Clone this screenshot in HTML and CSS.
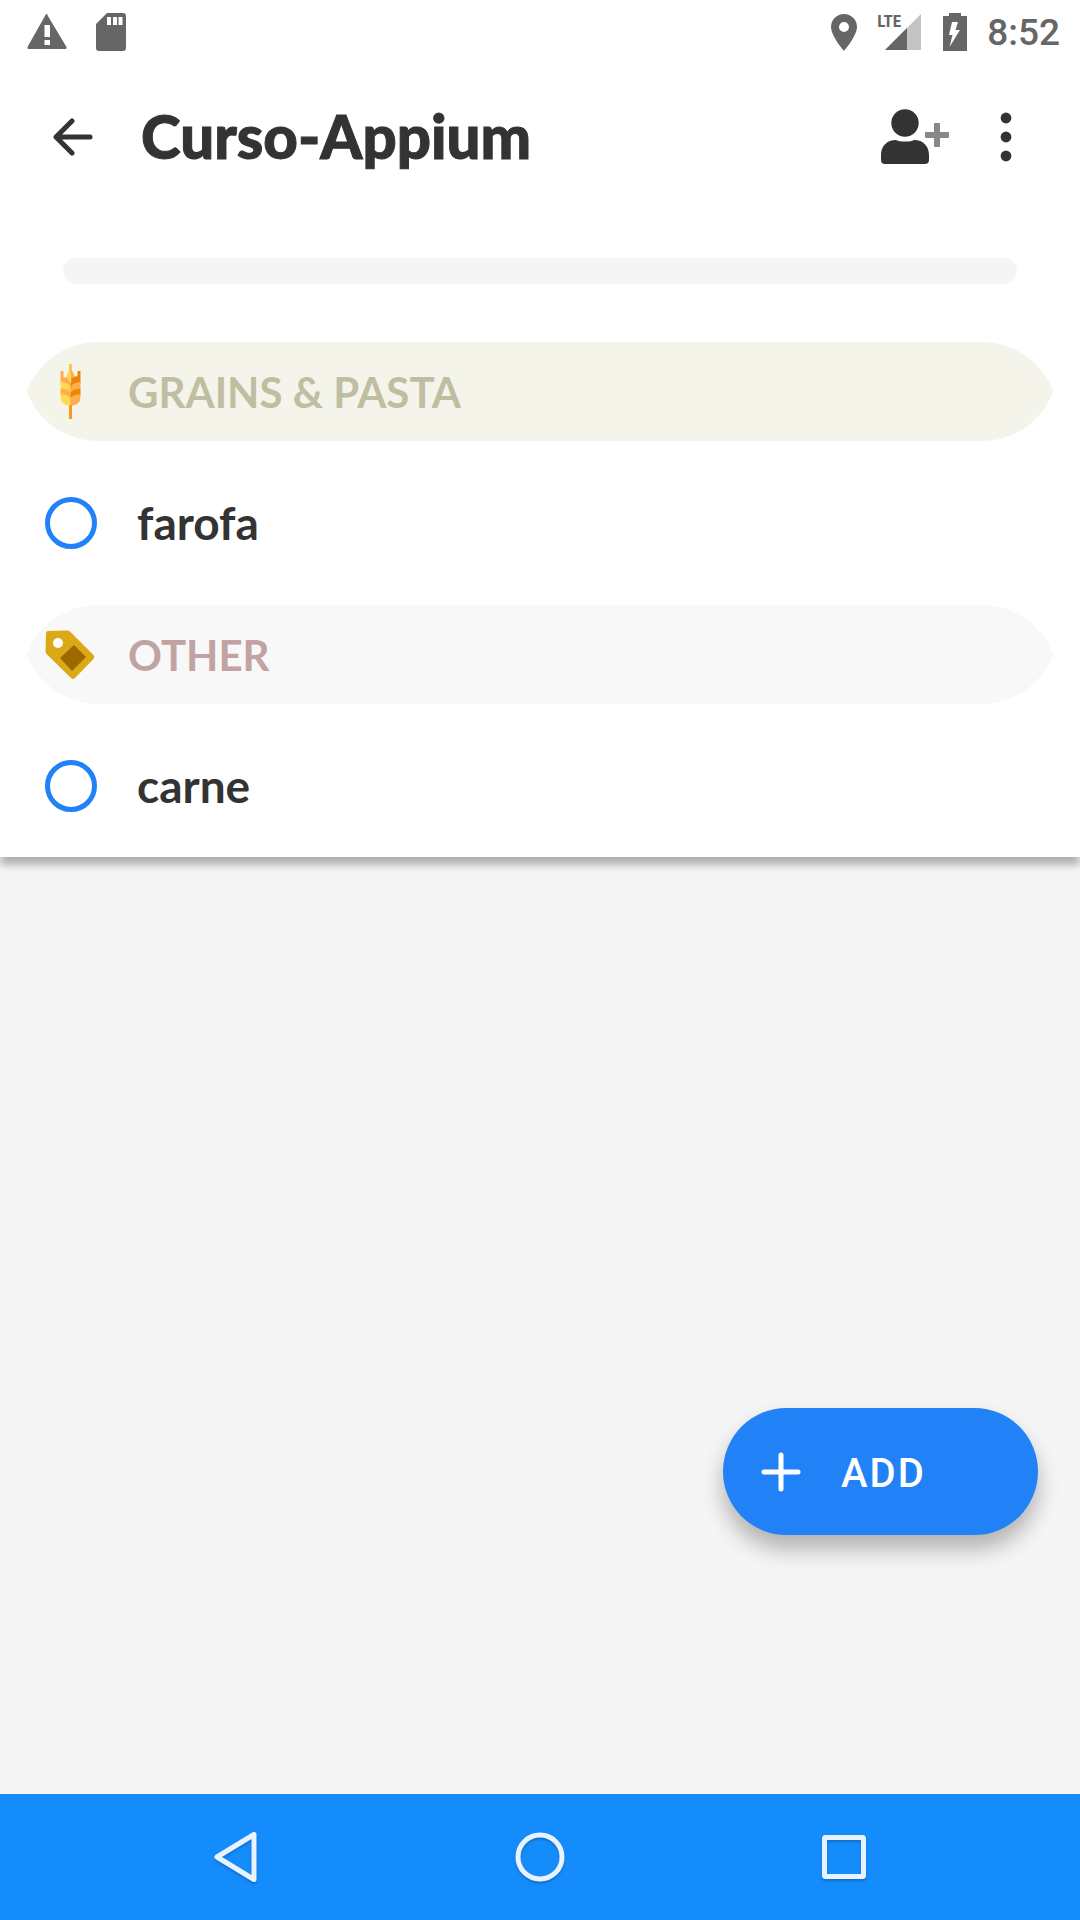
FILE: index.html
```html
<!DOCTYPE html>
<html lang="en">
<head>
<meta charset="utf-8">
<meta name="viewport" content="width=device-width, initial-scale=1">
<title>Curso-Appium</title>
<link rel="stylesheet" href="styles.css">
</head>
<body>
<div class="sheet">
  <div class="status">
    <svg class="status-alert" width="42" height="38" viewBox="0 0 42 38" aria-hidden="true"><path fill="#666" fill-rule="evenodd" d="M21 1.500L40.500 34Q41 36 39.500 36H2.500Q1 36 1.500 34L19.500 2Q21 0 22.500 2ZM18.500 12V24H24V12ZM18.500 27V32H24V27Z"/></svg>
    <svg width="32" height="38" viewBox="0 0 32 38" aria-hidden="true"><path fill="#666" fill-rule="evenodd" d="M12 0H28Q31 0 31 3V35Q31 38 28 38H4Q1 38 1 35V11ZM12 4V12H16V4ZM18 4V12H22V4ZM23.500 4V12H27.500V4Z"/></svg>
    <div class="status-right">
      <svg width="26" height="38" viewBox="0 0 26 38" aria-hidden="true"><path fill="#666" fill-rule="evenodd" d="M13 1A13 13 0 0 0 0 14C0 23 13 38 13 38S26 23 26 14A13 13 0 0 0 13 1ZM13 9A5 5 0 1 1 13 19A5 5 0 1 1 13 9Z"/></svg>
      <div class="signal">
        <svg width="36" height="38" viewBox="0 0 36 38" aria-hidden="true"><path fill="#c3c3c3" d="M0 37H36V1Z"/><path fill="#666" d="M0 37H22V15Z"/></svg>
        <span class="network">LTE</span>
      </div>
      <svg width="24" height="38" viewBox="0 0 24 38" aria-hidden="true"><path fill="#666" d="M6 0H18V3H24V38H0V3H6Z"/><path fill="#fff" d="M9 9H15L12.500 17H17L6.500 34L9.500 22H6Z"/></svg>
      <time class="clock">8:52</time>
    </div>
  </div>

  <header class="appbar">
    <button class="icon-button" aria-label="Back"><svg width="40" height="40" viewBox="0 0 40 40"><path d="M19 4L3 20L19 36M3 20H37" fill="none" stroke="#333" stroke-width="5" stroke-linecap="round" stroke-linejoin="round"/></svg></button>
    <h1 class="title">Curso-Appium</h1>
    <button class="icon-button" aria-label="Share list"><svg width="70" height="56" viewBox="0 0 70 56"><circle cx="24" cy="14" r="13.700" fill="#333"/><path fill="#333" d="M0 46C0 37 6 31 15 31Q18 32.500 24 32.500T33 31C42 31 48 37 48 46V51Q48 55 44 55H4Q0 55 0 51Z"/><path fill="#888" d="M53 15Q53 14 54 14H58Q59 14 59 15V23H67Q68 23 68 24V28Q68 29 67 29H59V37Q59 38 58 38H54Q53 38 53 37V29H45Q44 29 44 28V24Q44 23 45 23H53Z"/></svg></button>
    <button class="icon-button more" aria-label="More options"><svg width="12" height="50" viewBox="0 0 12 50"><g fill="#333"><circle cx="6" cy="6" r="5.400"/><circle cx="6" cy="25" r="5.400"/><circle cx="6" cy="44" r="5.400"/></g></svg></button>
  </header>

  <div class="progress"></div>

  <section class="group">
    <h2 class="chip grains">
      <svg class="chip-icon" width="50" height="56" viewBox="0 0 50 56" aria-hidden="true">
        <path fill="#ffc94d" d="M24 0H27V8H24Z"/>
        <path fill="#ffda4f" d="M25.500 5Q21 10 21 16H25.500Z"/><path fill="#ffab4a" d="M25.500 5Q30 10 30 16H25.500Z"/>
        <path fill="#ffae4f" d="M15.500 7H18.500V13Q25.500 14 25.500 20V28Q23 20 15.500 20Z"/>
        <path fill="#ef8500" d="M35.500 7H32.500V12Q25.500 13 25.500 19V27Q28 19 35.500 19Z"/>
        <path fill="#ffda4f" d="M15.500 18Q24 18 25.500 24V31Q22 25 15.500 25Z"/>
        <path fill="#ffae4f" d="M35.500 18Q27 18 25.500 24V31Q29 25 35.500 25Z"/>
        <path fill="#ffae4f" d="M15.500 24.500Q24 25 25.500 29V38Q22 31 15.500 31Z"/>
        <path fill="#ef8500" d="M35.500 24.500Q27 25 25.500 29V38Q29 31 35.500 31Z"/>
        <path fill="#ffda4f" d="M15.500 30.500Q24 30 25.500 35V42Q15.500 41 15.500 33Z"/>
        <path fill="#ffae4f" d="M35.500 30.500Q27 30 25.500 35V42Q35.500 41 35.500 33Z"/>
        <path fill="#f99a20" d="M24 41H27V55H24Z"/>
      </svg>
      <span>GRAINS &amp; PASTA</span>
    </h2>
    <label class="item"><input type="checkbox" class="tick"><span>farofa</span></label>
  </section>

  <section class="group">
    <h2 class="chip other">
      <svg class="chip-icon" width="50" height="50" viewBox="0 0 50 50" aria-hidden="true">
        <path fill="#dba916" d="M3 1L22 .5Q24 .5 25 1.500L48.500 25Q50 27 48.500 29L30 48Q28 50 26 48L1.500 24Q.5 23 .5 21L1 3Q1 1 3 1Z"/>
        <circle cx="13" cy="13" r="5" fill="#fff"/><path fill="#9c6800" d="M29 15L41 27L27 41L15 28Z"/>
      </svg>
      <span>OTHER</span>
    </h2>
    <label class="item"><input type="checkbox" class="tick"><span>carne</span></label>
  </section>
</div>

<main class="space">
  <button class="add"><svg width="40" height="40" viewBox="0 0 40 40" aria-hidden="true"><path d="M20 3V37M3 20H37" stroke="#fff" stroke-width="5" stroke-linecap="round"/></svg><span>ADD</span></button>
</main>

<nav class="system">
  <button class="icon-button" aria-label="Back"><svg width="50" height="54" viewBox="0 0 50 54"><path d="M43 4.500V49.500L6 27Z" fill="none" stroke="#e8f3ff" stroke-width="5" stroke-linejoin="round"/></svg></button>
  <button class="icon-button" aria-label="Home"><svg width="50" height="54" viewBox="0 0 50 54"><circle cx="25" cy="27" r="22" fill="none" stroke="#e8f3ff" stroke-width="5"/></svg></button>
  <button class="icon-button" aria-label="Recent apps"><svg width="50" height="54" viewBox="0 0 50 54"><rect x="5.500" y="7.500" width="39" height="39" rx="1" fill="none" stroke="#e8f3ff" stroke-width="5"/></svg></button>
</nav>
</body>
</html>
```
FILE: styles.css
```css
* { box-sizing: border-box; }

body {
  margin: 0;
  min-height: 100vh;
  display: flex;
  flex-direction: column;
  background: #f5f5f5;
  color: #333;
  font-family: Lato, "Liberation Sans", sans-serif;
}

svg { display: block; flex: none; }

button {
  border: 0;
  padding: 0;
  background: none;
  font: inherit;
  color: inherit;
}

.sheet {
  background: #fff;
  box-shadow: 0 8px 8px rgba(0, 0, 0, .28);
}

.status {
  height: 64px;
  padding: 0 20px 0 26px;
  display: flex;
  align-items: center;
  gap: 27px;
}

.status-right {
  margin-left: auto;
  display: flex;
  align-items: center;
  gap: 20px;
}

.signal {
  position: relative;
  margin-right: 2px;
  width: 44px;
  display: flex;
  justify-content: flex-end;
}

.network {
  position: absolute;
  left: 0;
  top: 0;
  color: #666;
  font: bold 17px/17px "Roboto Condensed", "Liberation Sans Narrow", Roboto, sans-serif;
}

.clock {
  padding-top: 2px;
  color: #666;
  font: 500 37px/44px Roboto, sans-serif;
}

.appbar {
  height: 146px;
  padding: 0 68px 0 53px;
  display: flex;
  align-items: center;
}

.title {
  flex: 1;
  margin: 0 0 0 48px;
  padding-bottom: 2px;
  font-size: 60px;
  line-height: 72px;
  font-weight: 900;
  -webkit-text-stroke: 1px currentColor;
}

.more { margin-left: 49px; }

.progress {
  height: 26px;
  margin: 48px 63px 58px;
  border-radius: 13px;
  background: #f5f5f5;
}

.group + .group { margin-top: 11px; }

/* Two rounded clips, one from each side, leave a point at both ends. */
.chip {
  position: relative;
  z-index: 0;
  height: 99px;
  margin: 0 22px 11px;
  padding-left: 23px;
  display: flex;
  align-items: center;
  gap: 33px;
  font-size: 42px;
  line-height: 52px;
  font-weight: 700;
  clip-path: inset(0 0 -80px round 76px);
}

.chip::before {
  content: "";
  position: absolute;
  z-index: -1;
  inset: 0;
  background: currentColor;
  clip-path: inset(-80px 0 0 round 76px);
}

.grains { color: #c0bea2; }
.grains::before { background: #f5f4eb; }
.other { color: #c0a3a2; }
.other::before { background: #f8f8f8; }

.item {
  height: 142px;
  padding: 0 45px;
  display: flex;
  align-items: center;
  gap: 40px;
  font-size: 46px;
  line-height: 56px;
  font-weight: 700;
}

.tick {
  appearance: none;
  width: 52px;
  height: 52px;
  margin: 0;
  border: 5px solid #2182f7;
  border-radius: 50%;
}

.space {
  flex: 1;
  display: flex;
  align-items: flex-end;
  justify-content: flex-end;
  padding: 0 42px 259px;
}

.add {
  width: 315px;
  height: 127px;
  padding-left: 38px;
  display: flex;
  align-items: center;
  gap: 40px;
  border-radius: 64px;
  background: #2182f7;
  color: #fff;
  font: 500 40px/48px Roboto, sans-serif;
  letter-spacing: 2px;
  box-shadow: 0 14px 22px rgba(0, 0, 0, .28);
}

.add span { padding-top: 4px; }

.system {
  height: 126px;
  padding: 0 211px;
  display: flex;
  align-items: center;
  justify-content: space-between;
  background: #158cfc;
}

.system svg { filter: drop-shadow(0 2px 1px rgba(0, 0, 0, .2)); }
```
